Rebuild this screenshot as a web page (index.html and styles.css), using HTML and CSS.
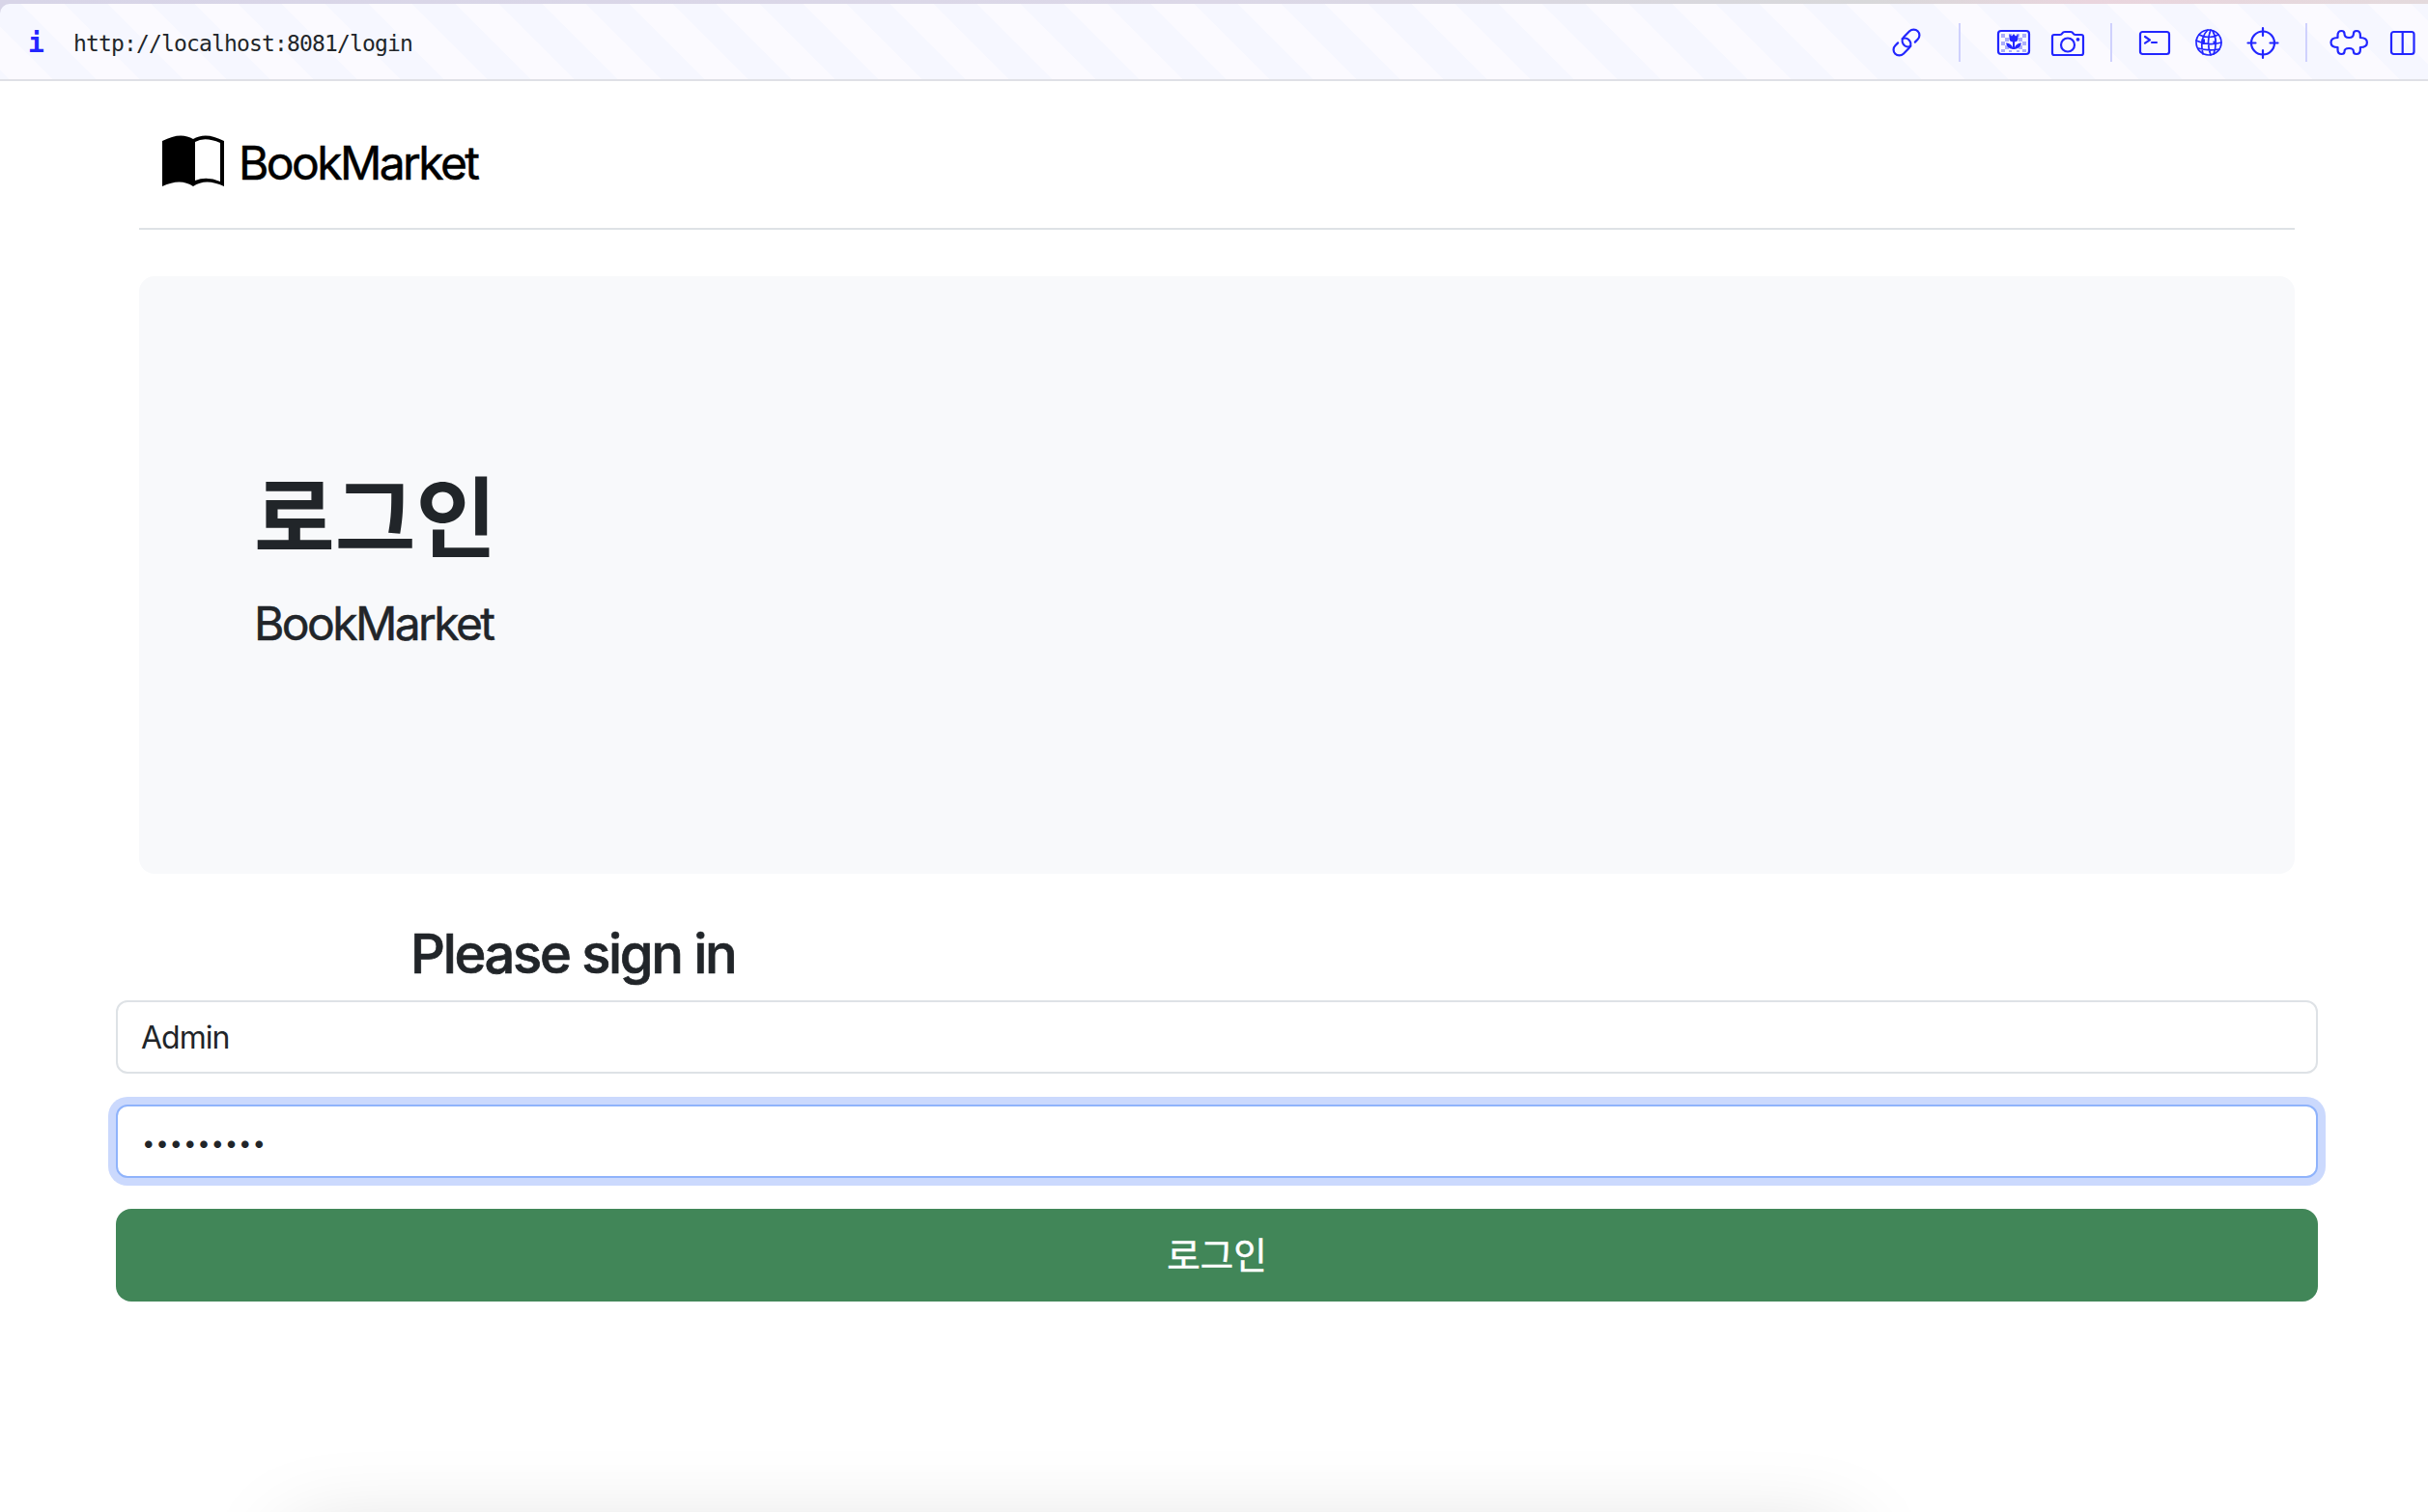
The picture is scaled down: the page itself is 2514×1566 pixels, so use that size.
FILE: index.html
```html
<!DOCTYPE html>
<html lang="ko">
<head>
<meta charset="utf-8">
<title>BookMarket</title>
<link rel="stylesheet" href="styles.css">
</head>
<body>
<div class="window-edge">
<header class="toolbar">
  <span class="info">i</span>
  <span class="url">http://localhost:8081/login</span>
  <div class="tools">
    <svg class="icon link" width="40" height="40" viewBox="0 0 40 40"><g transform="rotate(-45 20 20)"><path d="M13.500 14H9.500a6 6 0 0 0 0 12h8a6 6 0 0 0 2-11.700"/><path d="M26.500 26h4a6 6 0 0 0 0-12h-8a6 6 0 0 0-2 11.700"/></g></svg>
    <i class="sep wide"></i>
    <svg class="icon" width="40" height="40" viewBox="0 0 40 40"><rect x="4" y="8" width="32" height="24" rx="3"/><path class="checks" d="M7 11h4v4H7zM7 19h4v4H7zM7 27h4v3H7zM11 15h4v4h-4zM11 23h4v4h-4zM15 11h3v3h-3zM29 11h4v4h-4zM29 19h4v4h-4zM29 27h4v3h-4zM25 15h4v4h-4zM25 23h4v4h-4zM23 11h3v3h-3zM15 28h3v2h-3zM23 28h3v2h-3z"/><path class="solid" d="M15.500 11.500l2.500 2 2-2.500 2 2.500 2.500-2v4.500q0 3-3.500 3.500v5.500q2-4.500 7-4.500-1 5.500-7 6.500h-2q-6-1-7-6.500 5 0 7 4.500v-5.500q-3.500-.5-3.500-3.500z"/></svg>
    <svg class="icon" width="40" height="40" viewBox="0 0 40 40"><path d="M6 12h6q1.500 0 2.300-1.500T17 9h6q1.700 0 2.500 1.500T28 12h6q2 0 2 2v17q0 2-2 2H6q-2 0-2-2V14q0-2 2-2z"/><circle cx="20" cy="22.500" r="7"/><circle class="solid" cx="30.500" cy="16.800" r="1.900"/></svg>
    <i class="sep"></i>
    <svg class="icon" width="40" height="40" viewBox="0 0 40 40"><rect x="5" y="9" width="30" height="23" rx="2.500"/><path d="M10 14l5 3.300-5 3.300M17 20h5"/></svg>
    <svg class="icon thin" width="40" height="40" viewBox="0 0 40 40"><circle cx="20" cy="20" r="13"/><path d="M10 12q10 5 20 0M7 18q12 6 26 2M9 26q11 3 22 1M19 7q-9 9-5 25M22 7q-5 12 0 26M24 8q6 10 1 24"/><path class="solid" d="M12.500 16.500h3.500v3.500h-3.500zM24.500 18.500h3.500v3.500h-3.500z"/></svg>
    <svg class="icon" width="40" height="40" viewBox="0 0 40 40"><circle cx="20" cy="20.500" r="12"/><path d="M20 5v8M20 28v8M4.500 20.500h8M27.500 20.500h8"/></svg>
    <i class="sep"></i>
    <svg class="icon puzzle" width="44" height="40" viewBox="0 0 44 40"><path d="M10.500 15v-2.500q0-4.500 4-4.500 3 0 3 3 0 4 4.700 4t4.700-4q0-3 3-3 4 0 4 4.500V15q7 0 7 5t-7 5v2.500q0 4.500-4 4.500-3 0-3-2.500 0-3.500-4.700-3.500t-4.700 3.500q0 2.500-3 2.500-4 0-4-4.500V25q-7 0-7-5t7-5z"/></svg>
    <svg class="icon" width="40" height="40" viewBox="0 0 40 40"><rect x="8" y="9" width="23.500" height="23" rx="2.500"/><path d="M19.700 9v23"/></svg>
  </div>
</header>
</div>
<main class="page">
  <div class="brand">
    <svg width="64" height="54" viewBox="0 0 64 54"><path d="M0 6Q19-4 32 4Q45-4 64 6V53Q45 44 32 53Q19 44 0 53ZM34 7V47Q46 42 60 48V8Q44 1 34 7Z" fill-rule="evenodd"/></svg>
    <span class="name">BookMarket</span>
  </div>
  <section class="hero">
    <h1>로그인</h1>
    <p>BookMarket</p>
  </section>
  <form class="signin">
    <h3>Please sign in</h3>
    <input class="field" type="text" value="Admin">
    <input class="field focused" type="password" value="bookadmin">
    <button type="button">로그인</button>
  </form>
  <div class="dock-shade"></div>
</main>
</body>
</html>
```
FILE: styles.css
```css
* { box-sizing: border-box; }
body {
  margin: 0;
  height: 1566px;
  overflow: hidden;
  display: flex;
  flex-direction: column;
  background: #fff;
  color: #212529;
  font-family: Inter, "Noto Sans CJK KR", sans-serif;
}
.window-edge {
  flex: none;
  padding-top: 4px;
  background: linear-gradient(90deg, #d8d5e8, #dcd8e8 50%, #d8d8da 77%, #ead5de 86%, #e4dadd);
}
.toolbar {
  height: 80px;
  border-radius: 10px 0 0 0;
  display: flex;
  align-items: center;
  background: repeating-linear-gradient(45deg, #f6f7ff 0 8px, #fbfaff 8px 39.800px, #f6f7ff 39.800px 63.640px);
  box-shadow: inset 0 -2px #dfe0e6;
  font-family: "DejaVu Sans Mono", monospace;
}
.info { width: 76px; padding-left: 29px; font-size: 28px; font-weight: bold; color: #2226ff; }
.url { padding-top: 2px; font-size: 23px; letter-spacing: -.85px; line-height: 78px; }
.tools { margin-left: auto; display: flex; align-items: center; gap: 16px; padding-right: 6px; }
.icon { fill: none; stroke: #2226ff; stroke-width: 2.2; stroke-linejoin: round; stroke-linecap: round; }
.link { margin-right: -1px; }
.thin { stroke-width: 1.7; }
.solid { fill: #2226ff; stroke: none; }
.checks { fill: #abaefb; stroke: none; }
.puzzle { margin: 0 -2px 0 -3px; }
.sep { width: 2px; height: 40px; margin: 0 8px; background: #cfd1fd; }
.sep.wide { margin: 0 19px; }
.page { flex: 1; min-height: 0; position: relative; overflow: hidden; padding: 0 114px 0 120px; }
.brand {
  height: 154px;
  margin: 0 24px 48px;
  padding: 56px 24px 0;
  border-bottom: 2px solid #dee2e6;
  display: flex;
  gap: 15px;
  color: #000;
}
.name { font-size: 48px; line-height: 58px; letter-spacing: -2.6px; -webkit-text-stroke: .5px; }
.hero {
  height: 619px;
  margin: 0 24px;
  padding: 191px 120px 0 119px;
  border-radius: 16px;
  background: #f8f9fb;
}
h1 { margin: 0; font-size: 91px; line-height: 120px; font-weight: 700; }
.hero p { margin: 21px 0 0; font-size: 48px; line-height: 56px; letter-spacing: -2.6px; -webkit-text-stroke: .5px; }
.signin { display: flex; flex-direction: column; padding-top: 50px; }
h3 { margin: 0 0 15px; padding-left: 305px; font-size: 56px; line-height: 66px; font-weight: 500; letter-spacing: -2.3px; -webkit-text-stroke: .7px; }
.field {
  height: 76px;
  margin-bottom: 32px;
  padding: 0 24px;
  border: 2px solid #dee2e6;
  border-radius: 12px;
  outline: none;
  color: #212529;
  font: 32px Inter, sans-serif;
  letter-spacing: -1px;
}
.focused { padding: 2px 25px 0; border-color: #8fb3fb; box-shadow: 0 0 0 8px #cbd9fd; font-size: 24px; letter-spacing: .8px; }
button {
  height: 96px;
  padding: 0 0 6px;
  border: 0;
  border-radius: 16px;
  background: #418658;
  color: #fff;
  font: 37.500px "Noto Sans CJK KR", sans-serif;
  -webkit-text-stroke: .5px;
}
.dock-shade {
  position: absolute;
  left: 302px;
  top: 1426px;
  width: 1610px;
  height: 200px;
  top: 1508px;
  box-shadow: 0 0 92px rgba(0, 0, 0, .17);
}
```
